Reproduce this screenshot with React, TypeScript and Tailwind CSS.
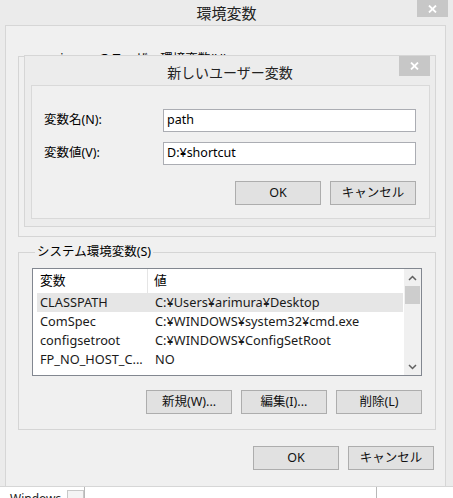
import React from "react";

function Btn({ children, w = "w-[86px]", h = "h-[24px]" }: { children: React.ReactNode; w?: string; h?: string }) {
  return (
    <div className={`${w} ${h} border border-[#adadad] bg-[#e1e1e1] text-[12.5px] text-[#111] flex items-center justify-center`}>
      {children}
    </div>
  );
}

function CloseBtn({ h }: { h: string }) {
  return (
    <div className={`w-[31px] ${h} bg-[#c7c7c7] flex items-center justify-center`}>
      <svg width="9" height="8" viewBox="0 0 9 8">
        <path d="M1 0.5 L8 7.5 M8 0.5 L1 7.5" stroke="#ffffff" strokeWidth="1.8" />
      </svg>
    </div>
  );
}

const rows = [
  ["CLASSPATH", "C:¥Users¥arimura¥Desktop"],
  ["ComSpec", "C:¥WINDOWS¥system32¥cmd.exe"],
  ["configsetroot", "C:¥WINDOWS¥ConfigSetRoot"],
  ["FP_NO_HOST_C...", "NO"],
];

export default function App() {
  return (
    <div className="relative w-[453px] h-[498px] overflow-hidden bg-white font-['Noto_Sans','Noto_Sans_CJK_JP',sans-serif] text-[#000]">
      {/* outer window */}
      <div className="h-[486px] bg-[#ebebeb] flex flex-col">
        <div className="h-[25px] grid grid-cols-[1fr_auto_1fr] items-start">
          <div />
          <div className="pt-[3px] text-[15px] leading-[20px] font-['Noto_Sans_CJK_JP',sans-serif] text-[#222]">環境変数</div>
          <div className="flex justify-end pr-[5px]">
            <CloseBtn h="h-[17px]" />
          </div>
        </div>
        <div className="flex-1 ml-[5px] mr-[7px] border border-[#d6d6d6] border-b-0 bg-[#f0f0f0] flex flex-col pl-[12px] pr-[9px]">
          {/* user group */}
          <fieldset className="mt-[22px] h-[189px] border border-[#d5d5d5] px-[13px]">
            <legend className="relative top-[3px] ml-[14px] px-[2px] text-[12.5px] leading-[16px]">arimura のユーザー環境変数(U)</legend>
          </fieldset>
          {/* system group */}
          <fieldset className="mt-[7px] border border-[#d5d5d5] px-[13px] pb-[15px]">
            <legend className="ml-[3px] px-[2px] text-[12.5px] leading-[16px]">システム環境変数(S)</legend>
            <div className="mt-[8px] h-[108px] border border-[#828790] bg-white flex">
              <div className="flex-1 flex flex-col text-[12.75px]">
                <div className="h-[24px] flex items-stretch">
                  <div className="w-[115px] pl-[7px] flex items-center border-r border-[#e5e5e5]">変数</div>
                  <div className="pl-[6px] flex items-center">値</div>
                </div>
                {rows.map((r, i) => (
                  <div
                    key={r[0]}
                    className={`h-[19px] ml-[4px] mr-[1px] grid grid-cols-[111px_1fr] items-center text-[#1a1a1a] ${i === 0 ? "bg-[#e6e6e6]" : ""}`}
                  >
                    <div className="pl-[3px] whitespace-nowrap overflow-hidden">{r[0]}</div>
                    <div className="pl-[7px] whitespace-nowrap">{r[1]}</div>
                  </div>
                ))}
              </div>
              <div className="w-[17px] bg-[#f0f0f0] flex flex-col">
                <div className="h-[17px] flex items-center justify-center">
                  <svg width="9" height="6" viewBox="0 0 9 6">
                    <path d="M1 5 L4.5 1.5 L8 5" stroke="#606060" strokeWidth="1.5" fill="none" />
                  </svg>
                </div>
                <div className="h-[18px] mx-[1px] bg-[#cdcdcd]" />
                <div className="flex-1" />
                <div className="h-[17px] flex items-center justify-center">
                  <svg width="9" height="6" viewBox="0 0 9 6">
                    <path d="M1 1 L4.5 4.5 L8 1" stroke="#606060" strokeWidth="1.5" fill="none" />
                  </svg>
                </div>
              </div>
            </div>
            <div className="mt-[14px] flex justify-end gap-[9px]">
              <Btn w="w-[86px]">新規(W)...</Btn>
              <Btn w="w-[86px]">編集(I)...</Btn>
              <Btn w="w-[86px]">削除(L)</Btn>
            </div>
          </fieldset>
          <div className="mt-[16px] flex justify-end gap-[9px] pr-[2px]">
            <Btn w="w-[86px]">OK</Btn>
            <Btn w="w-[86px]">キャンセル</Btn>
          </div>
        </div>
      </div>
      {/* bottom strip */}
      <div className="h-[12px] bg-white flex items-start border-t border-[#d6d6d6]">
        <div className="ml-[10px] mt-[4px] text-[12px] leading-[16px] text-[#222]">Windows</div>
        <div className="ml-[6px] mt-[3px] w-[17px] h-[12px] border border-[#c8c8c8] bg-[#f4f4f4]" />
        <div className="w-[293px] h-[12px] border-x border-[#b8b8b8] bg-white" />
      </div>

      {/* inner dialog overlay */}
      <div className="absolute left-[24px] top-[55px] w-[412px] h-[172px] bg-[#ececec] border border-[#d6d6d6] flex flex-col">
        <div className="h-[29px] grid grid-cols-[1fr_auto_1fr] items-start">
          <div />
          <div className="pt-[6px] text-[14px] leading-[20px] font-['Noto_Sans_CJK_JP',sans-serif] text-[#222]">新しいユーザー変数</div>
          <div className="flex justify-end pr-[5px]">
            <CloseBtn h="h-[20px]" />
          </div>
        </div>
        <div className="ml-[6px] mr-[5px] h-[134px] border border-[#d9d9d9] bg-[#f0f0f0] pl-[12px] pr-[13px] pt-[23px]">
          <div className="grid grid-cols-[119px_253px] gap-y-[10px] items-center text-[12.5px]">
            <div>変数名(N):</div>
            <div className="h-[23px] border border-[#abadb3] bg-white pl-[3px] flex items-center">path</div>
            <div>変数値(V):</div>
            <div className="h-[23px] border border-[#abadb3] bg-white pl-[3px] flex items-center">D:¥shortcut</div>
          </div>
          <div className="mt-[16px] flex justify-end gap-[9px]">
            <Btn w="w-[86px]" h="h-[24px]">OK</Btn>
            <Btn w="w-[86px]" h="h-[24px]">キャンセル</Btn>
          </div>
        </div>
      </div>
    </div>
  );
}
